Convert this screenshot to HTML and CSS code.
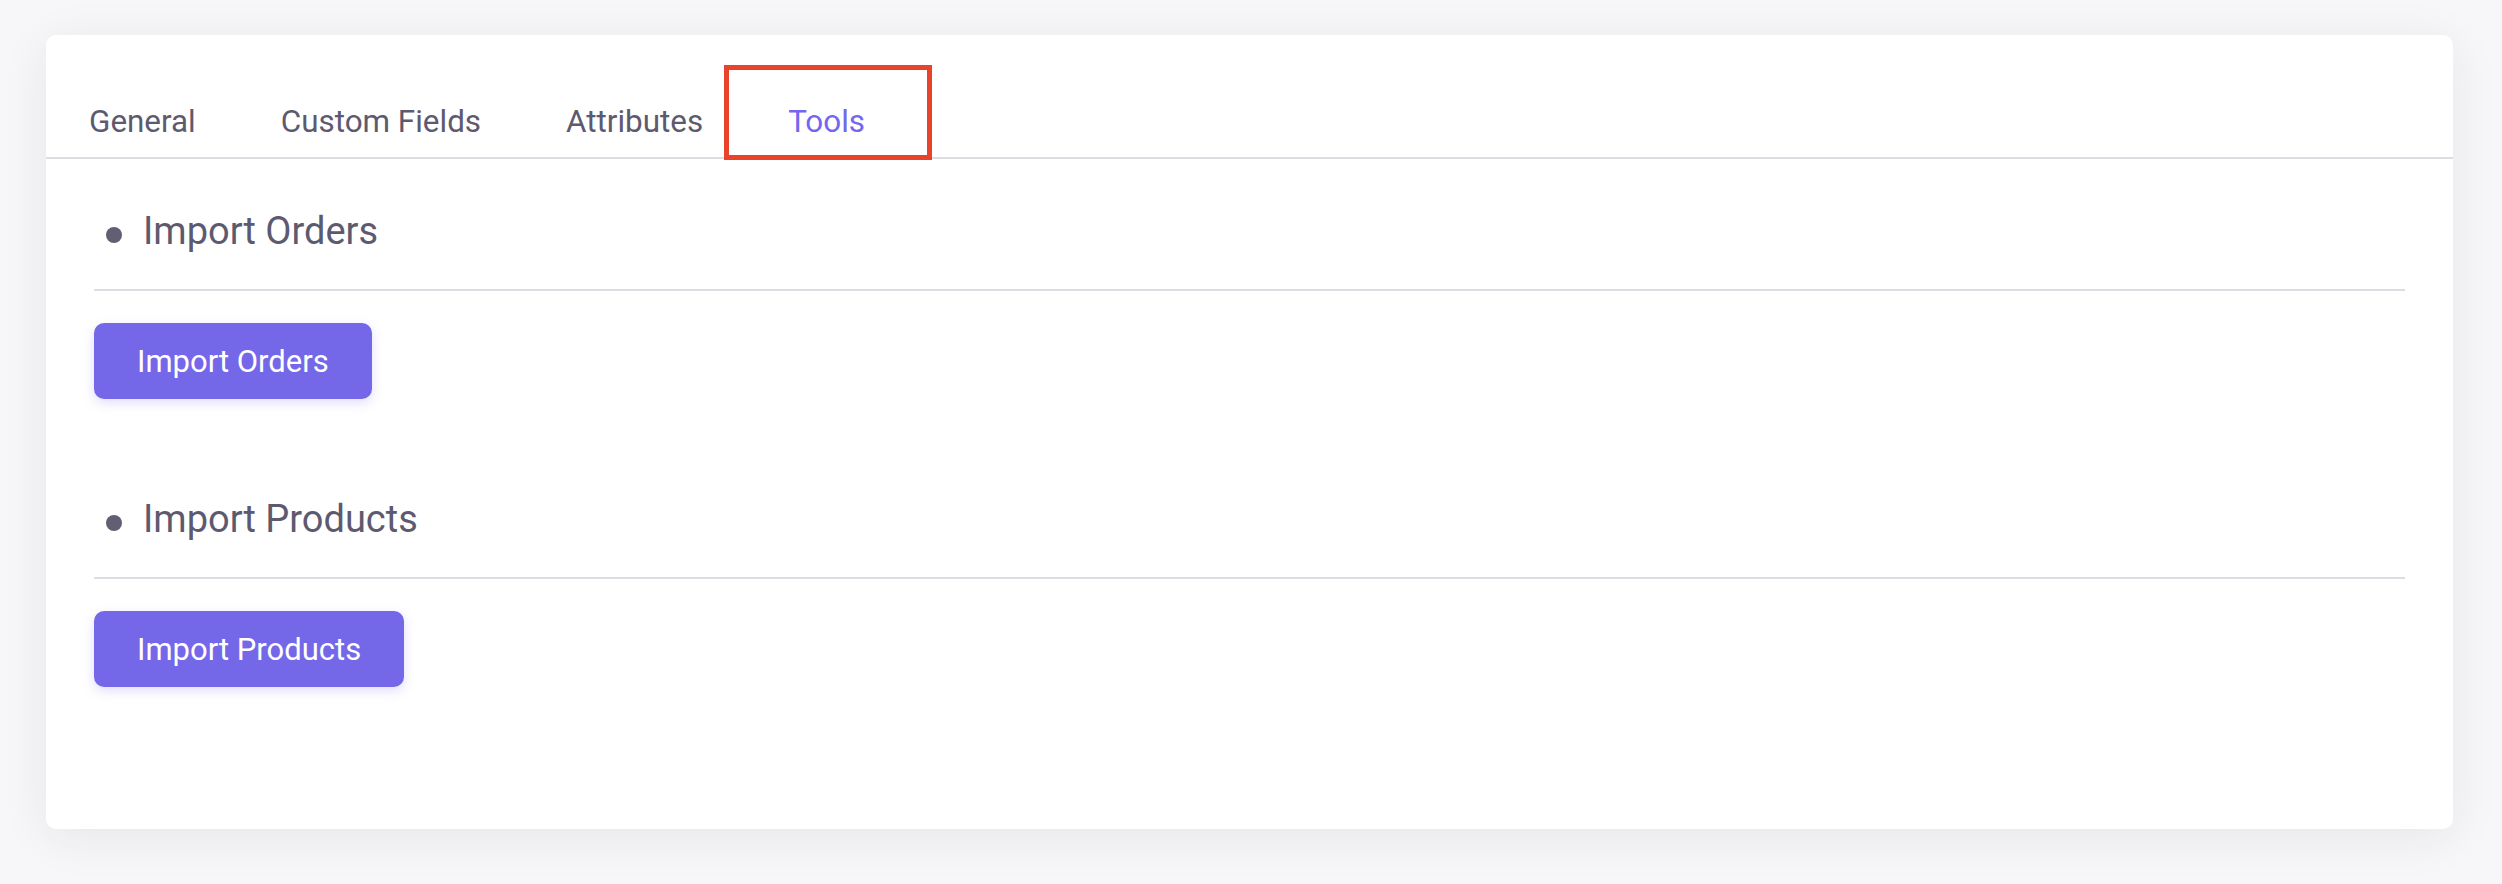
FILE: index.html
```html
<!DOCTYPE html>
<html lang="en">
<head>
<meta charset="utf-8">
<title>Tools</title>
<link rel="stylesheet" href="styles.css">
</head>
<body>
<div class="page">
  <div class="card">
    <nav class="tabs">
      <a class="tab">General</a>
      <a class="tab">Custom Fields</a>
      <a class="tab">Attributes</a>
      <a class="tab active">Tools</a>
    </nav>
    <div class="content">
      <section class="tool">
        <h2 class="tool-title"><span class="dot"></span>Import Orders</h2>
        <div class="rule"></div>
        <button class="btn">Import Orders</button>
      </section>
      <section class="tool">
        <h2 class="tool-title"><span class="dot"></span>Import Products</h2>
        <div class="rule"></div>
        <button class="btn">Import Products</button>
      </section>
    </div>
  </div>
</div>
</body>
</html>
```

FILE: styles.css
```css
html, body {
  margin: 0;
  padding: 0;
  background: #f7f7f9;
  font-family: Roboto, "Liberation Sans", sans-serif;
}

.page {
  padding: 35px 49px 55px 46px;
}

.card {
  background: #ffffff;
  border-radius: 10px;
  box-shadow: 0 8px 48px rgba(34, 41, 47, 0.08);
  height: 794px;
  box-sizing: border-box;
}

.tabs {
  display: flex;
  padding-top: 52px;
  border-bottom: 2px solid #dddce2;
}

.tab {
  position: relative;
  padding: 0 42px 0 43px;
  height: 70px;
  line-height: 70px;
  font-size: 31.4px;
  color: #5d5a6f;
}

.tab.active {
  color: #7367f0;
}

.tab.active::before {
  content: "";
  position: absolute;
  left: 0;
  right: 0;
  bottom: 0;
  height: 2px;
  background: #7367f0;
}

.tab.active::after {
  content: "";
  position: absolute;
  left: -21px;
  right: -25px;
  top: -22px;
  bottom: -3px;
  border: 5px solid #e8442b;
}

.content {
  padding: 47px 48px 0 48px;
}

.tool + .tool {
  margin-top: 95px;
}

.tool-title {
  display: flex;
  align-items: center;
  margin: 0;
  height: 50px;
  font-size: 38px;
  font-weight: 400;
  color: #5d5a6f;
}

.dot {
  width: 16px;
  height: 16px;
  border-radius: 50%;
  background: #625f74;
  margin: 8px 21px 0 12px;
}

.rule {
  height: 2px;
  background: #dddce2;
  margin-top: 33px;
}

.btn {
  display: block;
  margin-top: 32px;
  height: 76px;
  padding: 0 43px;
  border: none;
  border-radius: 10px;
  background: #7468e8;
  color: #ffffff;
  font-family: Roboto, "Liberation Sans", sans-serif;
  font-size: 31px;
  box-shadow: 0 4px 12px rgba(115, 103, 240, 0.22);
}
```
